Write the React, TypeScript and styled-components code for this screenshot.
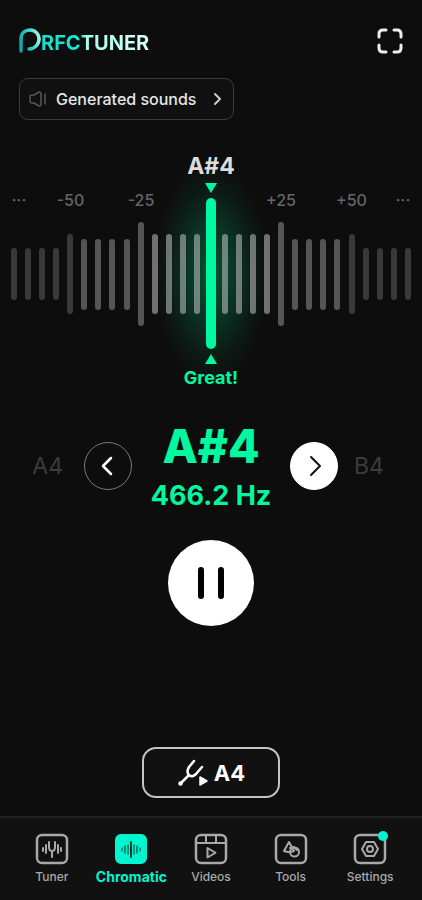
import React from "react";
import styled, { createGlobalStyle, css } from "styled-components";

const mint = "#00f9a0";
const aqua = "#00f5d0";
const base = "#0d0d0d";

const GlobalStyle = createGlobalStyle`
  *, *::before, *::after { box-sizing: border-box; }
  body {
    margin: 0;
    background: ${base};
    color: #fff;
    font-family: Inter, Roboto, sans-serif;
  }
  button { font: inherit; color: inherit; cursor: pointer; }
`;

const Screen = styled.div`
  min-height: 100vh;
  display: flex;
  flex-direction: column;
`;

const Header = styled.header`
  display: flex;
  justify-content: space-between;
  align-items: center;
  padding: 24px 18px 0 19px;
`;

const Brand = styled.a`
  display: flex;
  align-items: center;
  height: 34px;
  text-decoration: none;
  svg { display: block; }
`;

const BrandText = styled.span`
  margin-top: 4px;
  font-size: 20px;
  line-height: 24px;
  font-weight: 700;
  color: transparent;
  background: linear-gradient(90deg, #1cdccb 0%, #16ecd2 37%, #a9fbee 42%, #d6fff8 100%);
  background-clip: text;
  -webkit-background-clip: text;
`;

const IconButton = styled.button`
  display: flex;
  padding: 0;
  border: 0;
  background: none;
`;

const SoundsButton = styled.button`
  align-self: flex-start;
  display: flex;
  align-items: center;
  height: 42px;
  margin: 20px 0 0 19px;
  padding: 0 10px 0 8px;
  border: 1px solid #3c3c3c;
  border-radius: 9px;
  background: #101010;
  color: #e6e6e6;
  font-size: 16px;
  font-weight: 500;
  span { margin: 0 15px 0 8px; }
`;

const Gauge = styled.section`
  display: grid;
  grid-template-columns: 100%;
  margin-top: 32px;
`;

const layer = css`
  grid-row: 1;
  grid-column: 1;
`;

const Scale = styled.div`
  ${layer}
  position: relative;
  padding-top: 38px;
`;

const ScaleLabels = styled.div`
  display: grid;
  grid-template-columns: 38fr 65fr 76fr 64fr 76fr 65fr 38fr;
  text-align: center;
  font-size: 16px;
  line-height: 20px;
  font-weight: 500;
  color: #666;
`;

const Ticks = styled.div`
  display: flex;
  justify-content: space-between;
  align-items: center;
  height: 104px;
  margin-top: 12px;
  padding: 0 11px;
`;

const Tick = styled.i<{ $size: number; $tone: string }>`
  width: 6px;
  height: ${(p) => p.$size}px;
  border-radius: 3px;
  background: ${(p) => p.$tone};
`;

const Needle = styled.div`
  ${layer}
  justify-self: center;
  display: flex;
  flex-direction: column;
  align-items: center;
  position: relative;
`;

const Glow = styled.div`
  ${layer}
  justify-self: center;
  width: 116px;
  height: 226px;
  margin-top: 8px;
  background: radial-gradient(closest-side, rgba(0, 210, 135, 0.34), rgba(0, 200, 130, 0.22) 40%, rgba(0, 200, 130, 0.07) 75%, transparent);
`;

const Target = styled.div`
  font-size: 23px;
  line-height: 28px;
  font-weight: 700;
  color: #dcdcdc;
`;

const Pointer = styled.svg<{ $up?: boolean }>`
  display: block;
  width: 12px;
  height: 10px;
  margin: ${(p) => (p.$up ? "5px 0 3px" : "3px 0 5px")};
  fill: ${mint};
`;

const NeedleBar = styled.div`
  width: 10px;
  height: 151px;
  border-radius: 5px;
  background: ${mint};
`;

const Verdict = styled.div`
  font-size: 18px;
  line-height: 22px;
  font-weight: 700;
  color: ${mint};
`;

const NoteRow = styled.section`
  display: grid;
  grid-template-columns: 1fr 48px 158px 48px 1fr;
  align-items: center;
  margin-top: 29px;
`;

const Neighbour = styled.span<{ $side: "left" | "right" }>`
  justify-self: ${(p) => (p.$side === "left" ? "end" : "start")};
  margin: 0 ${(p) => (p.$side === "left" ? 21 : 16)}px;
  font-size: 23px;
  line-height: 28px;
  color: #3c3c3c;
`;

const StepButton = styled.button<{ $filled?: boolean }>`
  display: flex;
  align-items: center;
  justify-content: center;
  width: 48px;
  height: 48px;
  padding: 0;
  border-radius: 50%;
  border: 1px solid ${(p) => (p.$filled ? "#fff" : "#777")};
  background: ${(p) => (p.$filled ? "#fff" : "transparent")};
  color: ${(p) => (p.$filled ? "#111" : "#fff")};
`;

const Reading = styled.div`
  text-align: center;
  color: ${mint};
  white-space: nowrap;
`;

const Note = styled.div`
  font-size: 46px;
  line-height: 56px;
  font-weight: 800;
`;

const Frequency = styled.div`
  font-size: 27px;
  line-height: 34px;
  font-weight: 700;
  margin-top: 5px;
`;

const PauseButton = styled.button`
  align-self: center;
  display: flex;
  align-items: center;
  justify-content: center;
  width: 86px;
  height: 86px;
  margin-top: 27px;
  padding: 0;
  border: 0;
  border-radius: 50%;
  background: #fff;
`;

const ReferenceButton = styled.button`
  align-self: center;
  display: flex;
  align-items: center;
  justify-content: center;
  gap: 5px;
  width: 138px;
  height: 51px;
  margin: auto 0 18px;
  padding: 0;
  border: 2px solid #c4c4c4;
  border-radius: 14px;
  background: #111;
  font-size: 22px;
  font-weight: 700;
`;

const TabBar = styled.nav`
  display: grid;
  grid-template-columns: repeat(5, 1fr);
  height: 84px;
  padding: 15px 12px 0;
  border-top: 2px solid #222;
  background: #111;
`;

const Tab = styled.a<{ $active?: boolean }>`
  display: flex;
  flex-direction: column;
  align-items: center;
  gap: 3px;
  text-decoration: none;
  line-height: 18px;
  font-size: ${(p) => (p.$active ? 14 : 12)}px;
  font-weight: ${(p) => (p.$active ? 700 : 500)};
  color: ${(p) => (p.$active ? aqua : "#a9a9a9")};
`;

const TabIcon = styled.svg`
  display: block;
  width: 32px;
  height: 32px;
  overflow: visible;
  fill: none;
  stroke: currentColor;
  stroke-width: 2;
  stroke-linecap: round;
  stroke-linejoin: round;
`;

type TickSpec = { size: number; tone: string };

const half: TickSpec[] = [
  ...Array(4).fill({ size: 52, tone: "#393939" }),
  { size: 80, tone: "#393939" },
  ...Array(4).fill({ size: 71, tone: "#555" }),
  { size: 104, tone: "#555" },
  ...Array(4).fill({ size: 80, tone: "rgba(190, 190, 190, 0.56)" }),
];
const ticks: TickSpec[] = [...half, { size: 80, tone: "transparent" }, ...[...half].reverse()];

const Frame = () => <rect x="1" y="2" width="30" height="28" rx="5" strokeWidth="2.500" />;

const tabs = [
  {
    name: "Tuner",
    icon: (
      <>
        <Frame />
        <path d="M13 9v5q0 4 3 4t3-4V9M16 18v6" />
        <path d="M7 15v3M10 12v8M22 12v8M25 15v3" />
      </>
    ),
  },
  {
    name: "Chromatic",
    active: true,
    icon: (
      <>
        <rect x="1" y="2" width="30" height="28" rx="5" fill="currentColor" />
        <path d="M7 15v3M10 13v7M13 12v9M19 12v9M22 13v7M25 15v3" stroke="#08705f" strokeWidth="1.500" />
        <path d="M16 9v15" stroke="#063b33" />
      </>
    ),
  },
  {
    name: "Videos",
    icon: (
      <>
        <Frame />
        <path d="M1 10h30M11 2v8M21 2v8" />
        <path d="M12.500 15v9.500l8-4.750z" />
      </>
    ),
  },
  {
    name: "Tools",
    icon: (
      <>
        <Frame />
        <path d="M14 9l5 9q-5 2-10 0z" />
        <circle cx="19.500" cy="19" r="4.500" />
        <path d="M15 15l4-1 3 3" />
      </>
    ),
  },
  {
    name: "Settings",
    icon: (
      <>
        <Frame />
        <path d="M12 9h8l4 7-4 7h-8l-4-7z" />
        <circle cx="16" cy="16" r="3" />
        <circle cx="29" cy="3" r="5" fill={aqua} stroke="none" />
      </>
    ),
  },
];

export default function App() {
  return (
    <Screen>
      <GlobalStyle />
      <Header>
        <Brand href="#" aria-label="PRFCTUNER">
          <svg width="22" height="26" viewBox="0 0 22 26" fill="none" strokeWidth="3.500" strokeLinecap="round">
            <defs>
              <linearGradient id="mark" x1="0" y1="18" x2="22" y2="12" gradientUnits="userSpaceOnUse">
                <stop offset="0" stopColor="#149ca4" />
                <stop offset="0.5" stopColor="#22cfc4" />
                <stop offset="1" stopColor="#a8f8ea" />
              </linearGradient>
            </defs>
            <path d="M2 23V11C2 5 6 2 11 2s9 4 9 9-4 10-10 10" stroke="url(#mark)" />
          </svg>
          <BrandText>RFCTUNER</BrandText>
        </Brand>
        <IconButton aria-label="Full screen">
          <svg width="28" height="28" viewBox="0 0 28 28" fill="none" stroke="#eee" strokeWidth="3" strokeLinecap="round">
            <path d="M3 10V7q0-4 4-4h3M18 3h3q4 0 4 4v3M25 18v3q0 4-4 4h-3M10 25H7q-4 0-4-4v-3" />
          </svg>
        </IconButton>
      </Header>

      <SoundsButton>
        <svg width="20" height="18" viewBox="0 0 20 18" fill="none" stroke="#555" strokeWidth="1.500" strokeLinecap="round" strokeLinejoin="round">
          <path d="M6 5l5-3q2 0 2 2v10q0 2-2 2l-5-3H4q-2 0-2-2V7q0-2 2-2zM17 4v10" />
        </svg>
        <span>Generated sounds</span>
        <svg width="12" height="14" viewBox="0 0 12 14" fill="none" stroke="#ccc" strokeWidth="2" strokeLinecap="round" strokeLinejoin="round">
          <path d="M4 2l5 5-5 5" />
        </svg>
      </SoundsButton>

      <Gauge aria-label="Pitch gauge">
        <Glow />
        <Scale>
          <ScaleLabels>
            <span>···</span>
            <span>-50</span>
            <span>-25</span>
            <span />
            <span>+25</span>
            <span>+50</span>
            <span>···</span>
          </ScaleLabels>
          <Ticks>
            {ticks.map((t, i) => (
              <Tick key={i} $size={t.size} $tone={t.tone} />
            ))}
          </Ticks>
        </Scale>
        <Needle>
          <Target>A#4</Target>
          <Pointer viewBox="0 0 12 10"><path d="M0 0h12L6 10z" /></Pointer>
          <NeedleBar />
          <Pointer $up viewBox="0 0 12 10"><path d="M0 10h12L6 0z" /></Pointer>
          <Verdict>Great!</Verdict>
        </Needle>
      </Gauge>

      <NoteRow>
        <Neighbour $side="left">A4</Neighbour>
        <StepButton aria-label="Previous note">
          <svg width="20" height="24" viewBox="0 0 20 24" fill="none" stroke="currentColor" strokeWidth="2.500" strokeLinecap="round" strokeLinejoin="round">
            <path d="M13 4L5 12l8 8" />
          </svg>
        </StepButton>
        <Reading>
          <Note>A#4</Note>
          <Frequency>466.2 Hz</Frequency>
        </Reading>
        <StepButton $filled aria-label="Next note">
          <svg width="20" height="24" viewBox="0 0 20 24" fill="none" stroke="currentColor" strokeWidth="2" strokeLinecap="round" strokeLinejoin="round">
            <path d="M7 3l9 9-9 9" />
          </svg>
        </StepButton>
        <Neighbour $side="right">B4</Neighbour>
      </NoteRow>

      <PauseButton aria-label="Pause">
        <svg width="28" height="34" viewBox="0 0 28 34" stroke="#000" strokeWidth="6" strokeLinecap="round">
          <path d="M4 4v26M24 4v26" />
        </svg>
      </PauseButton>

      <ReferenceButton>
        <svg width="32" height="28" viewBox="0 0 32 28" fill="none" stroke="#fff" strokeWidth="2.500" strokeLinecap="round" strokeLinejoin="round">
          <circle cx="3.500" cy="24.500" r="1" />
          <path d="M3.500 24.500l8.500-8.500M17 2l-5 6q-3 5 0 8t7-1l6-7" />
          <path d="M23 18v8l7-4z" fill="#fff" strokeWidth="1.500" />
        </svg>
        A4
      </ReferenceButton>

      <TabBar>
        {tabs.map((t) => (
          <Tab key={t.name} href="#" $active={t.active} aria-current={t.active ? "page" : undefined}>
            <TabIcon viewBox="0 0 32 32" aria-hidden="true">{t.icon}</TabIcon>
            {t.name}
          </Tab>
        ))}
      </TabBar>
    </Screen>
  );
}
